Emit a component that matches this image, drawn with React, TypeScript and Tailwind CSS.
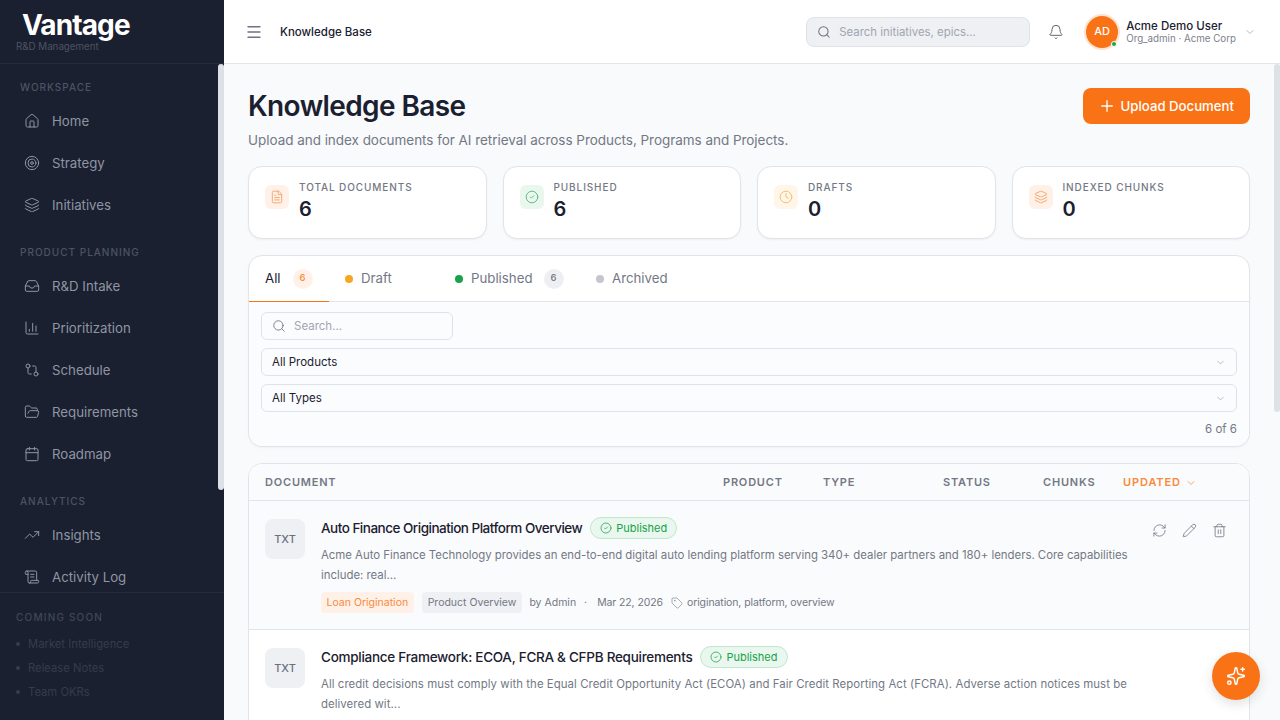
import {
  Bell,
  Calendar,
  ChartColumn,
  ChevronDown,
  CircleCheck,
  Clock,
  FileText,
  FolderOpen,
  GitCompare,
  House,
  Inbox,
  Layers,
  Menu,
  Pencil,
  Plus,
  RefreshCw,
  ScrollText,
  Search,
  Sparkles,
  Tag,
  Target,
  Trash2,
  TrendingUp,
} from 'lucide-react';
import type { LucideIcon } from 'lucide-react';

const navGroups: { title: string; items: { label: string; icon: LucideIcon }[] }[] = [
  {
    title: 'WORKSPACE',
    items: [
      { label: 'Home', icon: House },
      { label: 'Strategy', icon: Target },
      { label: 'Initiatives', icon: Layers },
    ],
  },
  {
    title: 'PRODUCT PLANNING',
    items: [
      { label: 'R&D Intake', icon: Inbox },
      { label: 'Prioritization', icon: ChartColumn },
      { label: 'Schedule', icon: GitCompare },
      { label: 'Requirements', icon: FolderOpen },
      { label: 'Roadmap', icon: Calendar },
    ],
  },
  {
    title: 'ANALYTICS',
    items: [
      { label: 'Insights', icon: TrendingUp },
      { label: 'Activity Log', icon: ScrollText },
    ],
  },
];

const stats = [
  { label: 'TOTAL DOCUMENTS', value: '6', icon: FileText, box: 'bg-[#fff1e8]', color: 'text-[#f59f5f]' },
  { label: 'PUBLISHED', value: '6', icon: CircleCheck, box: 'bg-[#e9f7ee]', color: 'text-[#4fb878]' },
  { label: 'DRAFTS', value: '0', icon: Clock, box: 'bg-[#fff5e8]', color: 'text-[#f0bb62]' },
  { label: 'INDEXED CHUNKS', value: '0', icon: Layers, box: 'bg-[#fff1e8]', color: 'text-[#f59f5f]' },
];

const docs = [
  {
    title: 'Auto Finance Origination Platform Overview',
    titleTracking: 'tracking-[-0.5px]',
    descTracking: 'tracking-[-0.014px]',
    line1:
      'Acme Auto Finance Technology provides an end-to-end digital auto lending platform serving 340+ dealer partners and 180+ lenders. Core capabilities',
    line2: 'include: real...',
    product: 'Loan Origination',
    type: 'Product Overview',
    date: 'Mar 22, 2026',
    tags: 'origination, platform, overview',
  },
  {
    title: 'Compliance Framework: ECOA, FCRA & CFPB Requirements',
    titleTracking: 'tracking-[-0.27px]',
    descTracking: 'tracking-[0.06px]',
    line1:
      'All credit decisions must comply with the Equal Credit Opportunity Act (ECOA) and Fair Credit Reporting Act (FCRA). Adverse action notices must be',
    line2: 'delivered wit...',
    product: 'Loan Origination',
    type: 'Policy',
    date: 'Mar 22, 2026',
    tags: 'compliance, ecoa, fcra',
  },
];

function Sidebar() {
  return (
    <aside className="flex h-full w-[224px] shrink-0 flex-col bg-[#1a2030]">
      <div className="h-[64px] shrink-0 border-b border-[#262c3b] pl-[16px] pt-[8px]">
        <div className="h-[30px] pl-[6px] text-[28px] font-bold leading-[34px] tracking-[-0.9px] text-white">
          Vantage
        </div>
        <div className="mt-[3px] text-[9.75px] leading-[12px] text-[#4d5361]">R&amp;D Management</div>
      </div>
      <nav className="relative min-h-0 flex-1 overflow-hidden pt-[16px]">
        <div className="absolute right-0 top-0 h-[426px] w-[6px] rounded-[3px] bg-[#dde1e7]" />
        {navGroups.map((group) => (
          <div key={group.title} className="mb-[19px]">
            <div className="h-[14px] pl-[20px] text-[10px] leading-[14px] font-medium tracking-[1px] text-[#4d5361]">
              {group.title}
            </div>
            <div className="mt-[6px]">
              {group.items.map((item) => (
                <div key={item.label} className="flex h-[42px] items-center gap-[12px] pl-[24px] text-[13.25px] text-[#8f95a3]">
                  <item.icon size={16} strokeWidth={1.5} className="shrink-0" />
                  <span className="pt-[2px]">{item.label}</span>
                </div>
              ))}
            </div>
          </div>
        ))}
      </nav>
      <div className="h-[128px] shrink-0 border-t border-[#262c3b] pl-[16px] pt-[17px]">
        <div className="text-[10px] leading-[14px] font-medium tracking-[1.2px] text-[#414755]">COMING SOON</div>
        <div className="mt-[8px]">
          {['Market Intelligence', 'Release Notes', 'Team OKRs'].map((label) => (
            <div key={label} className="flex h-[24px] items-center gap-[8px] text-[11.25px] text-[#363c4b]">
              <span className="h-[4px] w-[4px] rounded-full bg-[#363c4b]" />
              <span>{label}</span>
            </div>
          ))}
        </div>
      </div>
    </aside>
  );
}

function Topbar() {
  return (
    <header className="flex h-[64px] shrink-0 items-center border-b border-[#e2e4e9] bg-white pl-[21px] pr-[24px]">
      <Menu size={18} strokeWidth={1.75} className="text-[#6b7280]" />
      <div className="ml-[17px] pt-[2px] text-[11.5px] font-medium text-[#1a2030]">Knowledge Base</div>
      <div className="ml-auto flex h-[30px] w-[224px] items-center gap-[8px] rounded-[8px] border border-[#dfe2e8] bg-[#eef0f4] pl-[10px]">
        <Search size={14} strokeWidth={1.75} className="text-[#6b7280]" />
        <span className="pt-[2px] text-[11.4px] text-[#a0a5b1]">Search initiatives, epics...</span>
      </div>
      <Bell size={16} strokeWidth={1.5} className="ml-[18px] text-[#5f6572]" />
      <div className="relative ml-[22px] flex h-[32px] w-[32px] items-center justify-center rounded-full bg-[#f97316] text-[11px] font-medium text-white shadow-[0_0_0_2px_#fde3d0]">
        AD
        <span className="absolute bottom-[1px] right-[1px] h-[6px] w-[6px] rounded-full border border-white bg-[#16a34a]" />
      </div>
      <div className="ml-[8px]">
        <div className="text-[11.5px] leading-[14px] font-medium text-[#1a2030]">Acme Demo User</div>
        <div className="text-[9.75px] leading-[12px] text-[#7b808c]">Org_admin · Acme Corp</div>
      </div>
      <ChevronDown size={12} strokeWidth={1.5} className="ml-[8px] text-[#9ca1ad]" />
    </header>
  );
}

function StatCard({ stat }: { stat: (typeof stats)[number] }) {
  return (
    <div className="flex h-[73px] items-start rounded-[14px] border border-[#e2e4e9] bg-white pl-[16px] pt-[18px] shadow-[0_1px_2px_rgba(0,0,0,0.05)]">
      <div className={`flex h-[24px] w-[24px] items-center justify-center rounded-[6px] ${stat.box}`}>
        <stat.icon size={14} strokeWidth={1.5} className={stat.color} />
      </div>
      <div className="-mt-[5px] ml-[10px]">
        <div className="text-[10px] leading-[14px] font-medium tracking-[0.9px] text-[#737885]">{stat.label}</div>
        <div className="mt-[2px] text-[20px] leading-[26px] font-semibold text-[#1a2030]">{stat.value}</div>
      </div>
    </div>
  );
}

function Filters() {
  return (
    <section className="rounded-[14px] border border-[#e2e4e9] bg-white shadow-[0_1px_2px_rgba(0,0,0,0.04)]">
      <div className="flex h-[46px] border-b border-[#e2e4e9] text-[13.25px]">
        <div className="-mb-[1px] flex w-[80px] items-center border-b border-[#f97316] pl-[16px] text-[#1a2030]">
          All
          <span className="ml-[12px] flex h-[20px] w-[20px] items-center justify-center rounded-full bg-[#fff1e8] text-[9.5px] font-medium text-[#f98a3c]">6</span>
        </div>
        <div className="flex w-[110px] items-center pl-[16px] text-[#737885]">
          <span className="mr-[8px] h-[8px] w-[8px] rounded-full bg-[#f5a623]" />
          Draft
        </div>
        <div className="flex w-[141px] items-center pl-[16px] text-[#737885]">
          <span className="mr-[8px] h-[8px] w-[8px] rounded-full bg-[#16a34a]" />
          Published
          <span className="ml-[11px] flex h-[20px] w-[20px] items-center justify-center rounded-full bg-[#eeeff3] text-[9.5px] font-medium text-[#737885]">6</span>
        </div>
        <div className="flex items-center pl-[16px] text-[#737885]">
          <span className="mr-[8px] h-[8px] w-[8px] rounded-full bg-[#c4c6cc]" />
          Archived
        </div>
      </div>
      <div className="rounded-b-[14px] bg-[#fbfcfd] px-[12px] pb-[10px] pt-[10px]">
        <div className="flex h-[28px] w-[192px] items-center gap-[8px] rounded-[6px] border border-[#dfe2e8] pl-[10px]">
          <Search size={14} strokeWidth={1.5} className="text-[#6b7280]" />
          <span className="pt-[2px] text-[11.5px] text-[#a0a5b1]">Search...</span>
        </div>
        {['All Products', 'All Types'].map((label) => (
          <div key={label} className="mt-[8px] flex h-[28px] items-center justify-between rounded-[6px] border border-[#dfe2e8] px-[10px] text-[11.5px] text-[#1a2030]">
            <span className="pt-[2px]">{label}</span>
            <ChevronDown size={11} strokeWidth={1.5} className="text-[#9ca1ad]" />
          </div>
        ))}
        <div className="mt-[10px] text-right text-[11.5px] leading-[14px] text-[#737885]">6 of 6</div>
      </div>
    </section>
  );
}

function DocRow({ doc, first }: { doc: (typeof docs)[number]; first: boolean }) {
  return (
    <div className={`flex h-[129px] border-b border-[#e2e4e9] pl-[16px] pt-[18px] ${first ? 'bg-[#fafbfc]' : 'bg-white'}`}>
      <div className="flex h-[40px] w-[40px] shrink-0 items-center justify-center rounded-[8px] bg-[#eef0f4] text-[11px] font-medium text-[#6b7080]">
        TXT
      </div>
      <div className="ml-[16px] min-w-0 flex-1">
        <div className="-mt-[1px] flex h-[20px] items-center">
          <span className={`text-[13.5px] font-medium text-[#1a2030] ${doc.titleTracking}`}>{doc.title}</span>
          <span className="ml-[8px] flex h-[22px] items-center gap-[4px] rounded-full border border-[#bfe8cf] bg-[#e9f7ee] px-[9px] text-[11px] text-[#16a34a]">
            <CircleCheck size={12} strokeWidth={1.5} />
            Published
          </span>
        </div>
        <div className={`mt-[7px] text-[11.4px] leading-[20px] text-[#737885] ${doc.descTracking}`}>
          <div className="whitespace-nowrap">{doc.line1}</div>
          <div>{doc.line2}</div>
        </div>
        <div className="mt-[7px] flex h-[21px] items-center text-[10.5px] text-[#737885]">
          <span className="flex h-[21px] items-center rounded-[4px] bg-[#fff1e8] px-[5.5px] text-[#f98a3c]">{doc.product}</span>
          <span className="ml-[8px] flex h-[21px] items-center rounded-[4px] bg-[#eef0f4] px-[6px]">{doc.type}</span>
          <span className="ml-[7px]">by Admin</span>
          <span className="ml-[8px] mr-[10px]">·</span>
          <span className="tracking-[-0.1px]">{doc.date}</span>
          <Tag size={12} strokeWidth={1.25} className="ml-[8px] mr-[4px]" />
          <span className="tracking-[-0.1px]">{doc.tags}</span>
        </div>
      </div>
      {first && (
        <div className="mr-[22px] mt-[4px] flex shrink-0 gap-[15px] text-[#6b7080]">
          <RefreshCw size={15} strokeWidth={1.25} />
          <Pencil size={15} strokeWidth={1.25} />
          <Trash2 size={15} strokeWidth={1.25} />
        </div>
      )}
    </div>
  );
}

function DocTable() {
  const head = 'absolute top-0 text-[11px] leading-[37px] font-semibold tracking-[0.8px] text-[#737885]';
  return (
    <section className="mt-[16px] overflow-hidden rounded-[14px] border border-[#e2e4e9] bg-white">
      <div className="relative h-[37px] border-b border-[#e2e4e9] bg-[#fafbfc]">
        <span className={`${head} left-[16px]`}>DOCUMENT</span>
        <span className={`${head} left-[474px]`}>PRODUCT</span>
        <span className={`${head} left-[574px]`}>TYPE</span>
        <span className={`${head} left-[694px]`}>STATUS</span>
        <span className={`${head} left-[794px]`}>CHUNKS</span>
        <span className="absolute left-[874px] top-0 flex h-[37px] items-center gap-[4px] text-[11px] font-semibold tracking-[0.9px] text-[#f98a3c]">
          UPDATED
          <ChevronDown size={12} strokeWidth={1.5} />
        </span>
      </div>
      {docs.map((doc, i) => (
        <DocRow key={doc.title} doc={doc} first={i === 0} />
      ))}
    </section>
  );
}

export default function App() {
  return (
    <div className="flex h-[720px] w-[1280px] overflow-hidden bg-[#f8fafc] font-['Inter',sans-serif]">
      <Sidebar />
      <div className="flex min-w-0 flex-1 flex-col">
        <Topbar />
        <div className="relative min-h-0 flex-1">
          <div className="absolute right-0 top-0 h-[348px] w-[6px] rounded-[3px] bg-[#dde2e6]" />
          <main className="h-full overflow-hidden pl-[24px] pr-[30px] pt-[24px]">
            <div className="flex items-start justify-between">
              <div>
                <h1 className="text-[28px] leading-[36px] font-semibold tracking-[-0.6px] text-[#1a2030]">Knowledge Base</h1>
                <p className="mt-[6px] text-[13.5px] leading-[20px] tracking-[-0.04px] text-[#737885]">
                  Upload and index documents for AI retrieval across Products, Programs and Projects.
                </p>
              </div>
              <button className="flex h-[36px] items-center gap-[5px] rounded-[8px] bg-[#f97316] pl-[15px] pr-[16px] text-[13.2px] font-medium text-white">
                <Plus size={18} strokeWidth={1.75} />
                <span className="pt-[2px]">Upload Document</span>
              </button>
            </div>
            <div className="mt-[16px] grid grid-cols-4 gap-[16px]">
              {stats.map((stat) => (
                <StatCard key={stat.label} stat={stat} />
              ))}
            </div>
            <div className="mt-[16px]">
              <Filters />
            </div>
            <DocTable />
          </main>
        </div>
      </div>
      <button className="absolute left-[1212px] top-[652px] flex h-[48px] w-[48px] items-center justify-center rounded-full bg-[#f97316] text-white shadow-[0_4px_12px_rgba(0,0,0,0.12)]">
        <Sparkles size={20} strokeWidth={1.75} />
      </button>
    </div>
  );
}
